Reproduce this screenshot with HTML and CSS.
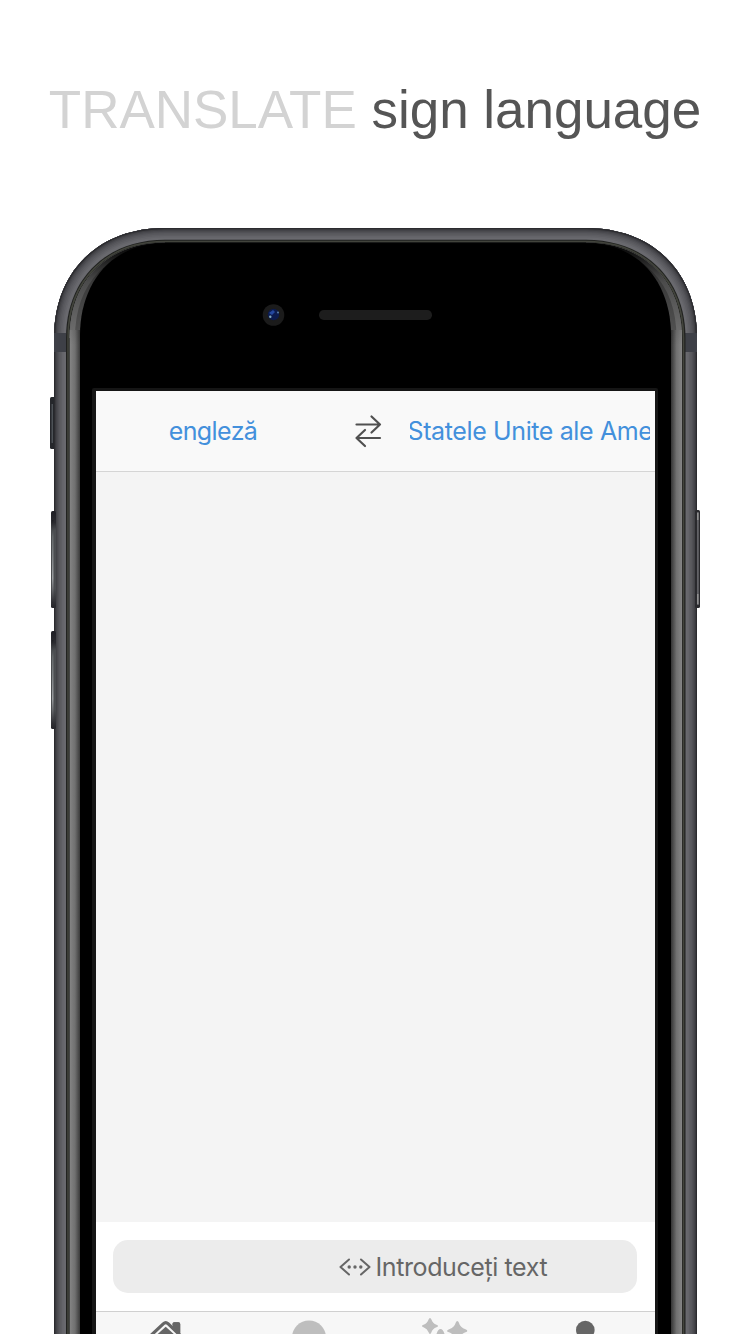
FILE: index.html
```
<!DOCTYPE html>
<html lang="ro">
<head>
<meta charset="utf-8">
<title>Translate sign language</title>
<link rel="stylesheet" href="styles.css">
</head>
<body>
<main class="page">
  <h1 class="headline"><span class="headline-light">TRANSLATE</span> sign language</h1>
  <div class="phone">
    <svg class="shell" viewBox="50 228 650 1106" width="650" height="1106" aria-hidden="true">
      <defs>
        <linearGradient id="rimL" x1="0" x2="1"><stop offset="0" stop-color="#858585"/><stop offset=".5" stop-color="#707070"/><stop offset="1" stop-color="#343434"/></linearGradient>
        <linearGradient id="rimR" x1="1" x2="0"><stop offset="0" stop-color="#858585"/><stop offset=".5" stop-color="#707070"/><stop offset="1" stop-color="#343434"/></linearGradient>
        <linearGradient id="fade" x1="0" y1="240" x2="0" y2="345" gradientUnits="userSpaceOnUse"><stop offset="0" stop-color="#000"/><stop offset=".12" stop-color="#000" stop-opacity=".85"/><stop offset=".4" stop-color="#000" stop-opacity=".35"/><stop offset="1" stop-color="#000" stop-opacity="0"/></linearGradient>
        <linearGradient id="key" x1="0" y1="0" x2="0" y2="1"><stop offset="0" stop-color="#202026"/><stop offset=".12" stop-color="#2b2b30"/><stop offset=".2" stop-color="#4b4d50"/><stop offset=".8" stop-color="#4b4d50"/><stop offset="1" stop-color="#25252a"/></linearGradient>
        <linearGradient id="shine" x1="0" y1="0" x2="0" y2="1"><stop offset="0" stop-color="#1d1d22"/><stop offset=".2" stop-color="#64686a"/><stop offset=".7" stop-color="#999c9f"/><stop offset="1" stop-color="#2b2b30"/></linearGradient>
        <path id="body" d="M54 1340V338C54 272 98 228 165 228H586C653 228 697 272 697 338V1340"/>
        <clipPath id="outer"><use href="#body"/></clipPath>
        <clipPath id="inner"><path d="M69.500 1340V338C69.500 281 107.500 242.500 165 242.500H586C644 242.500 682 281 682 338V1340Z"/></clipPath>
      </defs>
      <rect x="50" y="397" width="8" height="52" rx="1.500" fill="#25272b"/>
      <rect x="51.500" y="404" width="1.500" height="39" fill="#4c5156"/>
      <g clip-path="url(#outer)">
        <rect x="50" y="228" width="650" height="1110" fill="#69696e"/>
        <g fill="none">
          <use href="#body" stroke="#646469" stroke-width="19"/>
          <use href="#body" stroke="#5e5e63" stroke-width="16"/>
          <use href="#body" stroke="#58585d" stroke-width="13"/>
          <use href="#body" stroke="#515156" stroke-width="10"/>
          <use href="#body" stroke="#49494e" stroke-width="7.500"/>
          <use href="#body" stroke="#3f3f43" stroke-width="5"/>
          <use href="#body" stroke="#2b2b2f" stroke-width="2.500"/>
        </g>
        <path d="M54 333h12v19H54zM685 333h12v19h-12z" fill="#3e4047"/>
      </g>
      <path d="M66 1340V338C66 279.500 105.600 239.800 165 239.800H586C645.400 239.800 685.500 279.500 685.500 338V1340Z" fill="#212220"/>
      <path d="M68 1340V338C68 280.500 106.600 241.500 165 241.500H586C644.500 241.500 683.500 280.500 683.500 338V1340" fill="none" stroke="#42443c" stroke-width="1.600"/>
      <g clip-path="url(#inner)">
        <path d="M69 240h614v1100H69z" fill="#3a3a3a"/>
        <g fill="none">
          <path d="M75 321V338C75 281 107.500 248 165 248M676.500 321V338C676.500 281 644 248 586 248" stroke="#585858" stroke-width="11"/>
          <path d="M72 321V338C72 281 107.500 244 165 244M679.500 321V338C679.500 281 644 244 586 244" stroke="#747474" stroke-width="6"/>
        </g>
        <path d="M69.500 330h11v1010h-11z" fill="url(#rimL)"/>
        <path d="M671 330h11v1010h-11z" fill="url(#rimR)"/>
        <path d="M69 240h614v105H69z" fill="url(#fade)"/>
        <path d="M80 1340V335C80 287 108 243.500 164 243.500H587C643 243.500 671 287 671 335V1340Z" fill="#000"/>
      </g>
      <path d="M92 1340V390q0-2 2-2h562q2 0 2 2V1340Z" fill="#151515"/>
      <rect x="51" y="511" width="5" height="97" rx="1.500" fill="url(#key)"/>
      <rect x="52" y="520" width="1.500" height="83" fill="url(#shine)"/>
      <rect x="51" y="631" width="5" height="98" rx="1.500" fill="url(#key)"/>
      <rect x="52" y="640" width="1.500" height="84" fill="url(#shine)"/>
      <rect x="695" y="510" width="5" height="98" rx="1.500" fill="#29292d"/>
      <rect x="697" y="512" width="1.800" height="93" fill="#626267"/>
      <path d="M697.800 513v7M697.800 594v10" stroke="#999" stroke-width="1.300"/>
      <circle cx="273.500" cy="315" r="10.800" fill="#1b1b1b"/>
      <circle cx="273.500" cy="314.500" r="5.700" fill="#0c1b4e"/>
      <path d="M269 313l4-3 2 2-3 3z" fill="#2448a0"/>
      <circle cx="270.300" cy="316.700" r="1.200" fill="#80a8bd"/>
      <circle cx="278" cy="312.500" r=".9" fill="#6289ac"/>
      <rect x="319" y="310" width="113" height="10" rx="4.800" fill="#1d1d1d"/>
    </svg>
    <section class="screen">
      <header class="languages">
        <div class="source">engleză</div>
        <svg class="swap" width="28" height="34" viewBox="0 0 28 34"><path d="M2.500 10.500H26M17.500 2.500L26 10.500L17.500 18.500M26 24H2.500M11 16L2.500 24L11 32" /></svg>
        <div class="target">Statele Unite ale Ame</div>
      </header>
      <div class="canvas"></div>
      <div class="composer">
        <div class="field">
          <svg class="code" width="32" height="18" viewBox="0 0 32 18"><path d="M10 1.500L1.500 9L10 16.500M22 1.500L30.500 9L22 16.500"/><g><circle cx="10.200" cy="9" r="1.700"/><circle cx="16" cy="9" r="1.700"/><circle cx="21.800" cy="9" r="1.700"/></g></svg>
          <span class="placeholder">Introduceți text</span>
        </div>
      </div>
      <nav class="tabs">
        <svg width="560" height="22" viewBox="96 1312 560 22">
          <path d="M172.500 1334V1324q0-1.700 1.700-1.700h4.300q1.700 0 1.700 1.700V1334Z" fill="#666"/>
          <path d="M146 1341.500L163.500 1325.200Q165.700 1323 168 1325.200L185 1341.500" fill="none" stroke="#f7f7f7" stroke-width="6.500"/>
          <path d="M172.500 1334V1324q0-1.700 1.700-1.700h4.300q1.700 0 1.700 1.700V1334L172.500 1328Z" fill="#666"/>
          <path d="M146 1340L163.500 1323.700Q165.700 1321.500 168 1323.700L185 1340" fill="none" stroke="#666" stroke-width="3.200"/>
          <path d="M155.500 1336L165.700 1326.800L176 1336Z" fill="#666"/>
          <circle cx="309" cy="1337.500" r="17" fill="#bebebe"/>
          <path d="M430 1318q1 0 1.400 1.500Q432.700 1323.500 436.500 1324.700Q438 1325.200 438 1326T436.500 1327.200Q432.700 1328.500 431.400 1332.300Q431 1334 430 1334T428.600 1332.300Q427.300 1328.500 423.500 1327.200Q422 1326.800 422 1326T423.500 1324.700Q427.300 1323.500 428.600 1319.500Q429 1318 430 1318ZM457.300 1321q1 0 1.500 1.500Q460.300 1327.800 465.500 1329.300Q467.300 1330 467.300 1331T465.500 1332.300Q460.500 1334 458 1340H456Q454 1334 449 1332.300Q447 1331.800 447 1331T449 1329.300Q454.300 1327.800 455.800 1322.500Q456.200 1321 457.300 1321ZM436.500 1334Q438 1329 440.500 1329T444.500 1334Z" fill="#bebebe"/>
          <circle cx="585.300" cy="1330" r="9.300" fill="#666"/>
        </svg>
      </nav>
    </section>
  </div>
</main>
</body>
</html>
```
FILE: styles.css
```
body {
  margin: 0;
  background: #fff;
  font-family: Inter, "Liberation Sans", sans-serif;
}
.page {
  height: 1334px;
  overflow: hidden;
  display: flex;
  flex-direction: column;
  align-items: center;
}
.headline {
  margin: 0;
  height: 148px;
  padding-top: 80px;
  font: 400 53px/60px "Liberation Sans", Arial, sans-serif;
  letter-spacing: -0.03px;
  color: #555;
  white-space: nowrap;
}
.headline-light {
  color: #d3d3d3;
}
.phone {
  display: grid;
  width: 650px;
  height: 1106px;
}
.shell, .screen {
  grid-area: 1 / 1;
}
.screen {
  z-index: 1;
  margin: 163px 0 0 45.5px;
  width: 559.5px;
  display: flex;
  flex-direction: column;
  background: #fff;
  overflow: hidden;
}
.languages {
  box-sizing: border-box;
  height: 81px;
  padding-right: 5px;
  display: grid;
  grid-template-columns: 235px 75px 1fr;
  align-items: center;
  justify-items: center;
  background: #f9f9f9;
  border-bottom: 1px solid #d5d5d5;
  color: #4390dc;
  font-size: 25px;
  line-height: 34px;
}
.source {
  letter-spacing: -0.6px;
}
.swap {
  fill: none;
  stroke: #505050;
  stroke-width: 2.2;
  stroke-linecap: round;
  stroke-linejoin: round;
}
.target {
  justify-self: stretch;
  margin-left: 4.5px;
  overflow: hidden;
  display: flex;
  justify-content: center;
  letter-spacing: -0.38px;
  white-space: nowrap;
}
.canvas {
  height: 749.5px;
  background: #f4f4f4;
}
.composer {
  padding: 18.5px 18px 18px 17.5px;
}
.field {
  box-sizing: border-box;
  height: 53px;
  padding-left: 226px;
  display: flex;
  align-items: center;
  gap: 4.5px;
  border-radius: 15px;
  background: #ececec;
  color: #666;
  font-size: 25px;
  letter-spacing: -0.4px;
}
.code {
  fill: #666;
}
.code path {
  fill: none;
  stroke: #666;
  stroke-width: 2;
  stroke-linecap: round;
  stroke-linejoin: round;
}
.tabs {
  flex: 1;
  border-top: 1px solid #d0d0d0;
  background: #f7f7f7;
}
.tabs svg {
  display: block;
}
```
